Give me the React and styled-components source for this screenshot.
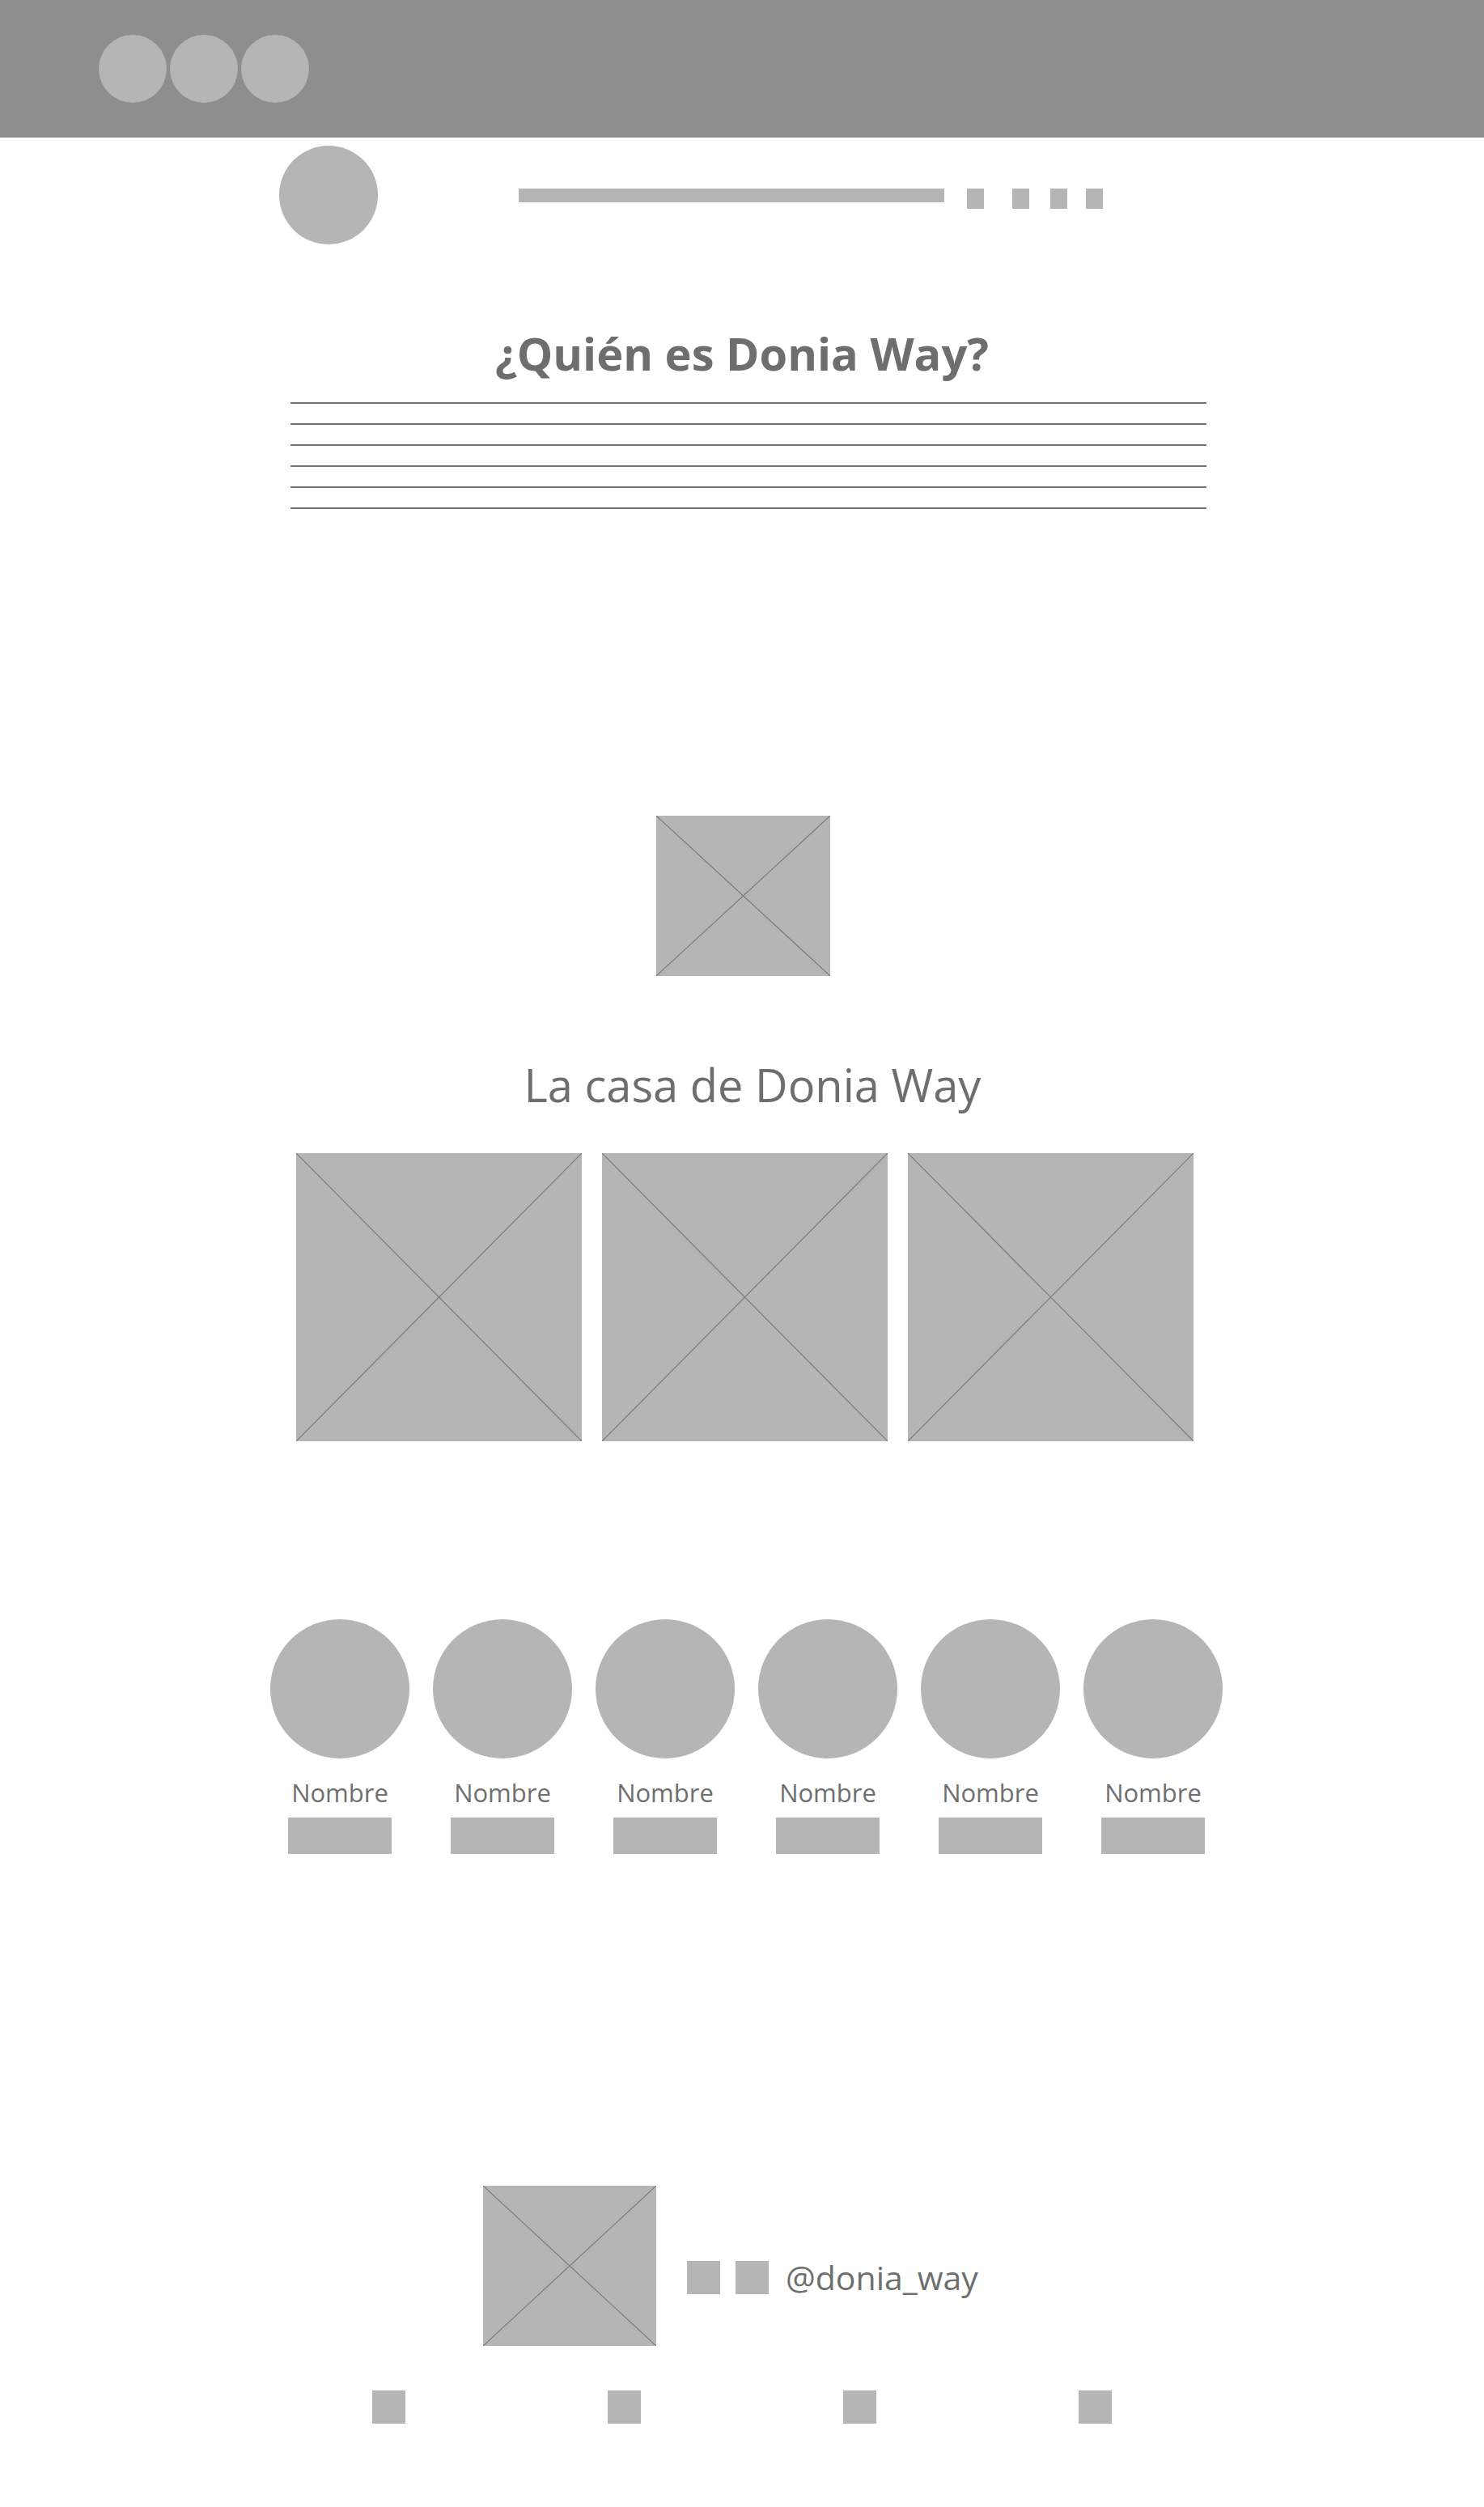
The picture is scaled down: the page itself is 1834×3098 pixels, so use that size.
import React from 'react';
import styled, { createGlobalStyle } from 'styled-components';

const GlobalStyle = createGlobalStyle`
  html, body {
    margin: 0;
    padding: 0;
    background: #fff;
  }
  body {
    font-family: "Open Sans", "Noto Sans", sans-serif;
    color: #6e6e6e;
  }
`;

const Page = styled.div`
  width: 1834px;
  min-height: 3098px;
  background: #fff;
`;

const TopBar = styled.div`
  height: 170px;
  background: #8e8e8e;
  display: flex;
  align-items: center;
  gap: 4px;
  padding-left: 122px;
`;

const WindowDot = styled.span`
  width: 84px;
  height: 84px;
  border-radius: 50%;
  background: #b5b5b5;
`;

const Header = styled.header`
  display: flex;
  align-items: flex-start;
  padding: 10px 0 0 345px;
`;

const Logo = styled.div`
  width: 122px;
  height: 122px;
  border-radius: 50%;
  background: #b5b5b5;
`;

const Nav = styled.nav`
  display: flex;
  align-items: flex-start;
  margin: 53px 0 0 174px;
`;

const NavBar = styled.span`
  width: 526px;
  height: 17px;
  background: #b5b5b5;
`;

const NavItem = styled.span`
  width: 21px;
  height: 25px;
  background: #b5b5b5;
  margin-left: ${p => p.$offset}px;
`;

const Title = styled.h1`
  margin: 106px 0 0;
  text-align: center;
  font-size: 56px;
  line-height: 56px;
  font-weight: 700;
  color: #6e6e6e;
`;

const Lines = styled.div`
  display: flex;
  flex-direction: column;
  gap: 24px;
  width: 1132px;
  margin: 33px 0 0 359px;
`;

const Rule = styled.span`
  height: 2px;
  background: #737373;
`;

const Placeholder = styled.div`
  width: ${p => p.$w}px;
  height: ${p => p.$h}px;
  flex: none;
  background: #b5b5b5;

  svg {
    display: block;
    width: 100%;
    height: 100%;
  }
`;

const HeroImage = styled.div`
  display: flex;
  padding-left: 811px;
  margin-top: 379px;
`;

const Subtitle = styled.h2`
  margin: 106px 0 0;
  text-align: center;
  font-size: 56px;
  line-height: 56px;
  font-weight: 400;
  color: #6e6e6e;
  padding-left: 26px;
`;

const Gallery = styled.div`
  display: flex;
  gap: 25px;
  margin: 57px 0 0 366px;
`;

const Team = styled.div`
  display: flex;
  gap: 29px;
  margin: 220px 0 0 334px;
`;

const Member = styled.div`
  display: flex;
  flex-direction: column;
  align-items: center;
  width: 172px;
`;

const Avatar = styled.div`
  width: 172px;
  height: 172px;
  border-radius: 50%;
  background: #b5b5b5;
`;

const MemberName = styled.span`
  margin-top: 27px;
  font-size: 31px;
  line-height: 31px;
  color: #6e6e6e;
`;

const MemberTag = styled.span`
  margin-top: 15px;
  width: 128px;
  height: 45px;
  background: #b5b5b5;
`;

const Footer = styled.footer`
  display: flex;
  align-items: flex-start;
  margin: 410px 0 0 597px;
`;

const Social = styled.div`
  display: flex;
  align-items: center;
  margin: 93px 0 0 38px;
`;

const SocialIcon = styled.span`
  width: 41px;
  height: 41px;
  background: #b5b5b5;
  margin-right: ${p => p.$space}px;
`;

const Handle = styled.span`
  font-size: 41px;
  line-height: 41px;
  color: #6e6e6e;
`;

const BottomLinks = styled.div`
  display: flex;
  gap: 250px;
  margin: 55px 0 0 460px;
`;

const BottomLink = styled.span`
  width: 41px;
  height: 41px;
  background: #b5b5b5;
`;

const Cross = () => (
  <svg viewBox="0 0 100 100" preserveAspectRatio="none">
    <line x1="0" y1="0" x2="100" y2="100" stroke="#7a7a7a" strokeWidth="1.2" vectorEffect="non-scaling-stroke" />
    <line x1="100" y1="0" x2="0" y2="100" stroke="#7a7a7a" strokeWidth="1.2" vectorEffect="non-scaling-stroke" />
  </svg>
);

const navOffsets = [28, 35, 26, 23];

export default function App() {
  return (
    <>
      <GlobalStyle />
      <Page>
        <TopBar>
          <WindowDot />
          <WindowDot />
          <WindowDot />
        </TopBar>

        <Header>
          <Logo />
          <Nav>
            <NavBar />
            {navOffsets.map((o, i) => (
              <NavItem key={i} $offset={o} />
            ))}
          </Nav>
        </Header>

        <Title>¿Quién es Donia Way?</Title>
        <Lines>
          {[0, 1, 2, 3, 4, 5].map(i => (
            <Rule key={i} />
          ))}
        </Lines>

        <HeroImage>
          <Placeholder $w={215} $h={198}>
            <Cross />
          </Placeholder>
        </HeroImage>

        <Subtitle>La casa de Donia Way</Subtitle>
        <Gallery>
          {[0, 1, 2].map(i => (
            <Placeholder key={i} $w={353} $h={356}>
              <Cross />
            </Placeholder>
          ))}
        </Gallery>

        <Team>
          {[0, 1, 2, 3, 4, 5].map(i => (
            <Member key={i}>
              <Avatar />
              <MemberName>Nombre</MemberName>
              <MemberTag />
            </Member>
          ))}
        </Team>

        <Footer>
          <Placeholder $w={214} $h={198}>
            <Cross />
          </Placeholder>
          <Social>
            <SocialIcon $space={19} />
            <SocialIcon $space={21} />
            <Handle>@donia_way</Handle>
          </Social>
        </Footer>

        <BottomLinks>
          {[0, 1, 2, 3].map(i => (
            <BottomLink key={i} />
          ))}
        </BottomLinks>
      </Page>
    </>
  );
}
